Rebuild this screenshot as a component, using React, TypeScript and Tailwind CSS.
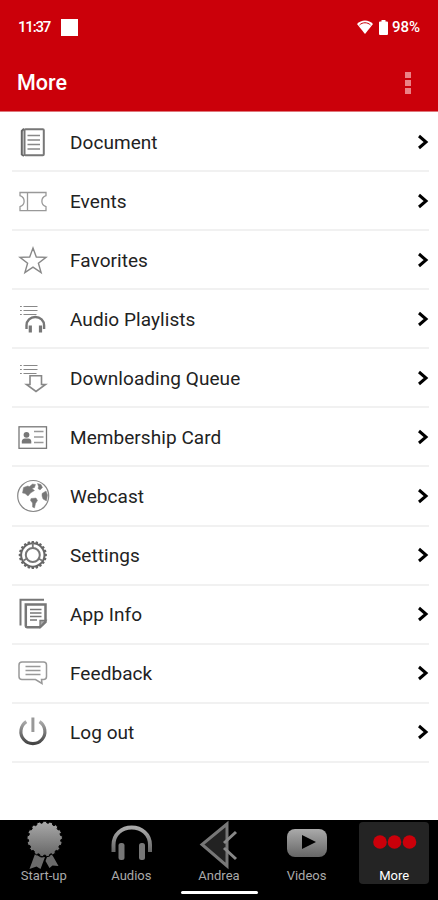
import { useState, ReactNode } from 'react';

interface MenuItem {
  label: string;
  icon: ReactNode;
}

// Every menu icon is drawn on a 36x36 canvas
function MenuIcon({ children }: { children: ReactNode }) {
  return (
    <svg width="36" height="36" viewBox="0 0 36 36" fill="none" stroke="#777" strokeWidth="1.3" className="shrink-0">
      {children}
    </svg>
  );
}

function ListLines() {
  return (
    <g stroke="#888" strokeWidth="1.2">
      <path d="M8.5 5.5h14M8.5 9.5h14M8.5 13.5h13" />
      <path d="M5 5.5h1.8M5 9.5h1.8M5 13.5h1.8" />
    </g>
  );
}

function gearPath(cx: number, cy: number, outer: number, inner: number, teeth: number): string {
  const points: string[] = [];
  const step = (Math.PI * 2) / teeth;
  for (let i = 0; i < teeth; i++) {
    const a = i * step - Math.PI / 2;
    const corners = [[-0.36, inner], [-0.24, outer], [0.24, outer], [0.36, inner]];
    corners.forEach(([t, r]) => {
      points.push(`${(cx + r * Math.cos(a + t * step)).toFixed(2)} ${(cy + r * Math.sin(a + t * step)).toFixed(2)}`);
    });
  }
  return `M${points.join('L')}Z`;
}

const items: MenuItem[] = [
  {
    label: 'Document',
    icon: (
      <>
        <path d="M9 4.800 6.800 7v23.500L9 32" stroke="#666" strokeWidth="2" />
        <rect x="9.500" y="5.300" width="19.300" height="26" rx="1" stroke="#777" strokeWidth="2" />
        <path d="M12.500 11.500h12.500M12.500 16h12.500M12.500 20.500h12.500M12.500 25h12.500" stroke="#888" strokeWidth="1.400" />
      </>
    ),
  },
  {
    label: 'Events',
    icon: (
      <>
        <path d="M5 9.500h26v3.200c-5.500 2-5.500 9 0 11v4H5v-4c5.500-2 5.500-9 0-11z" stroke="#999" />
        <path d="M12.500 9.500v18" stroke="#999" />
      </>
    ),
  },
  {
    label: 'Favorites',
    icon: <path d="m18 6 3.300 9 9.700.400-7.600 5.800 2.700 9.300-8.100-5.400-8.100 5.400 2.700-9.300L5 15.400l9.700-.400z" stroke="#888" strokeWidth="1.400" />,
  },
  {
    label: 'Audio Playlists',
    icon: (
      <>
        <ListLines />
        <path d="M11.500 28v-3.500c0-5 3.800-8.500 8.800-8.500s8.800 3.500 8.800 8.500V28" strokeWidth="2.400" stroke="#777" />
        <path d="M15.300 24.500v7M25.500 24.500v7" strokeWidth="3.200" stroke="#777" />
      </>
    ),
  },
  {
    label: 'Downloading Queue',
    icon: (
      <>
        <ListLines />
        <path d="M15 15.800h11.500v8.700h4L21 31.500l-9.500-7H15z" fill="white" stroke="#888" strokeWidth="1.600" />
      </>
    ),
  },
  {
    label: 'Membership Card',
    icon: (
      <>
        <rect x="4" y="7.800" width="27.500" height="21.500" stroke="#777" />
        <circle cx="11.500" cy="15.800" r="2.900" fill="#777" stroke="none" />
        <path d="M6.800 24.500v-2c0-2 1.500-3 3-3h3.500c1.700 0 3 1 3 3v2z" fill="#777" stroke="none" />
        <path d="M19 12.500h9.500M19 18h9.500M19 23.500h9.500" stroke="#999" strokeWidth="1.300" />
      </>
    ),
  },
  {
    label: 'Webcast',
    icon: (
      <>
        <circle cx="18.200" cy="18" r="15.500" stroke="#888" strokeWidth="1.200" />
        <path d="m8.500 9.500 4-1.500 2 .5 3-2.500 3 .5-1 3-2.500 1 2.500 2-4 2.500-2.500 3-3-2.500-2.500-.5zM22.500 5.500l3.500 1 1.500 3-2.500 2.500-2-1.500.5-2zM27 15.500l4-2.500 1.500 4-1 6-3.500-2-1-3zM16 20.500l5-.5 1.500 2.500-2 3-1 4.500-2-1v-4l-2-2.500z" fill="#777" stroke="#888" strokeWidth=".5" />
      </>
    ),
  },
  {
    label: 'Settings',
    icon: (
      <>
        <path d={gearPath(17.8, 18, 14.1, 12.5, 20)} fill="#666" stroke="none" />
        <circle cx="17.800" cy="18" r="10.700" fill="white" stroke="none" />
        <circle cx="17.800" cy="18" r="7" stroke="#777" strokeWidth="2" />
        <path d="M17.800 6v5M8.500 23.500l3.500-2M27 23.500l-3.500-2" strokeWidth="1.800" />
      </>
    ),
  },
  {
    label: 'App Info',
    icon: (
      <>
        <path d="M5.500 29.500V3.800H29" stroke="#777" strokeWidth="2" />
        <path d="M10.800 8.500h19.700v17.500l-5.500 5.200H12a1.200 1.200 0 0 1-1.200-1.200z" stroke="#777" strokeWidth="2.500" />
        <path d="M31 24.500h-6v6.500z" fill="#aaa" stroke="#777" />
        <path d="M15 13.500h11.500M15 17h11.500M15 20.500h11.500M15 24h7" stroke="#777" strokeWidth="1.700" />
      </>
    ),
  },
  {
    label: 'Feedback',
    icon: (
      <>
        <path d="M7 7h21.500a3 3 0 0 1 3 3v11.500a3 3 0 0 1-3 3h-2l.5 4-6.500-4H7a3 3 0 0 1-3-3V10a3 3 0 0 1 3-3z" stroke="#999" strokeWidth="1.500" />
        <path d="M10.500 11.500h15M10.500 15.500h15M10.500 19.500h15" stroke="#999" />
      </>
    ),
  },
  {
    label: 'Log out',
    icon: (
      <>
        <path d="M11.300 7.600a12 12 0 1 0 13.200 0" stroke="url(#menuShade)" strokeWidth="3.200" />
        <path d="M17.900 3.500v14.500" stroke="#999" strokeWidth="3" />
      </>
    ),
  },
];

const tabs: MenuItem[] = [
  {
    label: 'Start-up',
    icon: (
      <>
        <path d="m16 34-5.500 15 7-2.500 4 2.500 4.500-12-4 .500z" fill="#6b6b6b" />
        <path d="m28 37 5-2.500 6.500 11.500-6-.500-3 2.500-4-7z" fill="#6b6b6b" />
        <path d={gearPath(25.7, 19, 17.8, 16.2, 17)} fill="url(#tabShade)" stroke="black" strokeWidth="1" />
      </>
    ),
  },
  {
    label: 'Audios',
    icon: (
      <>
        <path d="M7.500 32v-7C7.500 14 16 7.500 25.700 7.500S44 14 44 25v7" fill="none" stroke="url(#tabShade)" strokeWidth="4" />
        <rect x="12.500" y="23" width="6" height="17" rx="2.500" fill="#777" />
        <rect x="33" y="23" width="6" height="17" rx="2.500" fill="#777" />
      </>
    ),
  },
  {
    label: 'Andrea',
    icon: (
      <>
        <path d="M33 4 8 24.500 33 46z" fill="#222" stroke="#777" strokeWidth="3" />
        <path d="M42 12 30 23M30 28l12 11" fill="none" stroke="#888" strokeWidth="3" />
      </>
    ),
  },
  {
    label: 'Videos',
    icon: (
      <>
        <rect x="5" y="9" width="40" height="28" rx="8" fill="url(#tabShade)" />
        <path d="m20 15 14 7-14 7z" fill="black" />
      </>
    ),
  },
  {
    label: 'More',
    icon: (
      <g fill="#cb000a">
        <circle cx="11" cy="22" r="6.800" />
        <circle cx="25.500" cy="22" r="6.800" />
        <circle cx="40.500" cy="22" r="6.800" />
      </g>
    ),
  },
];

// Gradients shared by the menu and the tab icons
function Shades() {
  return (
    <svg width="0" height="0" className="absolute">
      <defs>
        <linearGradient id="menuShade" x1="0" y1="0" x2="0" y2="1">
          <stop offset="0" stopColor="#aaa" />
          <stop offset="1" stopColor="#444" />
        </linearGradient>
        <linearGradient id="tabShade" x1="0" y1="0" x2="0" y2="1">
          <stop offset="0" stopColor="#aaa" />
          <stop offset="1" stopColor="#666" />
        </linearGradient>
      </defs>
    </svg>
  );
}

function StatusBar() {
  return (
    <div className="flex h-[54px] items-center pr-[16px] pl-[18px] text-white">
      <span className="w-[43px] text-[15px] font-medium tracking-[-1.200px]">11:37</span>
      <span className="size-[17px] bg-white" />
      <svg width="16" height="14" viewBox="0 0 16 14" className="ml-auto">
        <path d="M0 4C4-.8 12-.8 16 4L8 14z" fill="white" />
        <path d="M2.500 5c3-3 8-3 11 0" fill="none" stroke="#cb000a" strokeWidth="1" />
      </svg>
      <svg width="9" height="15" viewBox="0 0 9 15" className="ml-[6px]">
        <path d="M2.500 1.500V0h4v1.500H8a1 1 0 0 1 1 1V14a1 1 0 0 1-1 1H1a1 1 0 0 1-1-1V2.500a1 1 0 0 1 1-1z" fill="white" />
      </svg>
      <span className="ml-1 w-[30px] text-[15px] font-medium whitespace-nowrap">98%</span>
    </div>
  );
}

export default function App() {
  const [active, setActive] = useState('More');

  return (
    <div className="flex h-[900px] w-[438px] flex-col overflow-hidden bg-white font-[Roboto,sans-serif]">
      <Shades />
      <header className="h-[112px] shrink-0 border-b border-[#de777b] bg-[#cb000a]">
        <StatusBar />
        <div className="flex h-[58px] items-center justify-between pr-[27px] pl-[17px]">
          <h1 className="pt-px text-[21.500px] font-medium text-white">More</h1>
          <button className="flex flex-col gap-[2px]" aria-label="Options">
            <span className="size-[6px] bg-[#eb8286]" />
            <span className="size-[6px] bg-[#eb8286]" />
            <span className="size-[6px] bg-[#eb8286]" />
          </button>
        </div>
      </header>

      <main className="flex-1 pt-[1.200px] pr-[9px] pl-3">
        {items.map(item => (
          <div key={item.label} className="flex h-[59.050px] items-center border-b-2 border-[#f1f1f1] pl-[3px]">
            <MenuIcon>{item.icon}</MenuIcon>
            <span className="ml-[19px] flex-1 pt-[3px] text-[19px] tracking-[0.060px] text-[#222]">{item.label}</span>
            <svg width="12" height="16" viewBox="0 0 12 16" fill="none" stroke="black" strokeWidth="3">
              <path d="m2 2 7 6-7 6" />
            </svg>
          </div>
        ))}
      </main>

      <nav className="flex h-20 shrink-0 flex-col bg-black">
        <div className="flex h-[64px] pt-[2px]">
          {tabs.map(tab => (
            <button
              key={tab.label}
              onClick={() => setActive(tab.label)}
              className="flex flex-1 justify-center"
            >
              <span className={`flex h-[62px] w-[70px] flex-col items-center rounded ${active === tab.label ? 'bg-[#242424] text-white' : 'text-[#aaa]'}`}>
                <svg width="50" height="46" viewBox="0 2 50 46" className="shrink-0 overflow-visible">{tab.icon}</svg>
                <span className="text-[13px] leading-4">{tab.label}</span>
              </span>
            </button>
          ))}
        </div>
        <div className="mx-auto mt-[7px] h-[3px] w-[77px] rounded-full bg-white" />
      </nav>
    </div>
  );
}
